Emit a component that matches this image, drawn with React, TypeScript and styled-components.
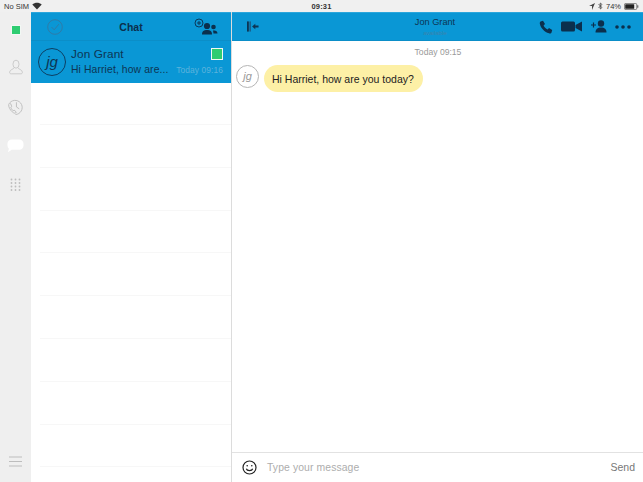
import React from "react";
import styled, { createGlobalStyle } from "styled-components";

const Global = createGlobalStyle`
  html, body { margin: 0; padding: 0; background: #fff; }
  body { font-family: "Liberation Sans", "Open Sans", sans-serif; }
  * { box-sizing: border-box; }
`;
const Page = styled.div`
  width: 643px; height: 482px; display: flex; flex-direction: column; overflow: hidden;
`;
const StatusBar = styled.div`
  height: 12px; flex: none; background: #f0f0f0; display: grid; grid-template-columns: 1fr auto 1fr;
  align-items: center; padding: 0 4px; font-size: 7.5px; color: #333;
`;
const StatusLeft = styled.div`display: flex; align-items: center; gap: 3px;`;
const StatusRight = styled.div`display: flex; align-items: center; justify-content: flex-end; gap: 3px;`;
const Time = styled.div`font-weight: 700; font-size: 7.5px; letter-spacing: .2px;`;
const Body = styled.div`flex: 1; display: flex; min-height: 0;`;
const Rail = styled.nav`
  width: 31px; flex: none; background: #efefef; display: flex; flex-direction: column; align-items: center;
  padding-top: 13px;
`;
const RailSlot = styled.div<{ $h: number }>`
  height: ${p => p.$h}px; width: 100%; display: flex; align-items: flex-start; justify-content: center;
`;
const RailBottom = styled.div`margin-top: auto; padding-bottom: 11px;`;
const Presence = styled.span<{ $size: number }>`
  display: block; width: ${p => p.$size}px; height: ${p => p.$size}px; background: #2ecc71; border: 1px solid #f1f8f4;
`;
const ListPane = styled.section`
  width: 201px; flex: none; display: flex; flex-direction: column; border-right: 1px solid #dcdcdc;
`;
const ListHeader = styled.header`
  height: 29px; flex: none; background: #0a97d5; display: grid; grid-template-columns: 1fr auto 1fr;
  align-items: center; padding: 0 13px; border-top: 1px solid #2ba6dc; border-bottom: 1px solid #0b8ec8;
`;
const HeaderStart = styled.div`display: flex; padding-left: 3px;`;
const HeaderTitle = styled.div`
  font-size: 10.5px; font-weight: 700; color: #0b2f4d; padding-top: 1px;
`;
const HeaderEnd = styled.div`display: flex; justify-content: flex-end;`;
const ChatRow = styled.div`
  height: 42px; flex: none; background: #0a97d5; display: flex; align-items: center; padding: 0 8px 0 7px;
  color: #0d3554;
`;
const Avatar = styled.div`
  width: 28px; height: 28px; flex: none; border-radius: 50%; border: 1px solid #0d3f63;
  display: flex; align-items: center; justify-content: center; font-style: italic; font-size: 15px;
  color: #0d3554; padding-bottom: 2px;
`;
const ChatText = styled.div`flex: 1; min-width: 0; margin-left: 5px;`;
const ChatLine = styled.div`display: flex; justify-content: space-between; align-items: center; height: 15.500px;`;
const ChatName = styled.span`font-size: 11.800px; letter-spacing: .1px;`;
const ChatPreview = styled.span`font-size: 10.400px; letter-spacing: .1px;`;
const ChatTime = styled.span`font-size: 8.400px; color: #5cb3dc; white-space: nowrap; letter-spacing: .1px;`;
const EmptyRow = styled.div`
  height: 42.800px; flex: none; border-bottom: 1px solid #f7f7f7;
  &:first-child { height: 42px; }
`;
const Rows = styled.div`flex: 1; overflow: hidden; margin-left: 9px;`;
const Main = styled.main`flex: 1; min-width: 0; display: flex; flex-direction: column;`;
const MainHeader = styled.header`
  height: 29px; flex: none; background: #0a97d5; display: grid; grid-template-columns: 1fr auto 1fr;
  align-items: center; padding: 0 12px 0 7px; border-top: 1px solid #2ba6dc; border-bottom: 1px solid #0b8ec8;
`;
const BackButton = styled.div`display: flex; padding-left: 8px;`;
const Contact = styled.div`text-align: center; color: #0d3554; line-height: 1; padding-top: 1px;`;
const ContactName = styled.div`font-size: 9.200px;`;
const ContactState = styled.div`font-size: 6px; color: #3d83ac; margin-top: 2px;`;
const Actions = styled.div`display: flex; align-items: center; justify-content: flex-end; gap: 8.500px;`;
const Thread = styled.div`flex: 1; min-height: 0; padding: 6px 4px 0;`;
const DayLabel = styled.div`text-align: center; font-size: 8.600px; color: #9a9a9a; line-height: 11px; padding-left: 1px;`;
const Message = styled.div`display: flex; align-items: flex-start; gap: 5px; margin-top: 7px;`;
const SmallAvatar = styled.div`
  width: 23px; height: 23px; border-radius: 50%; border: 1px solid #b5b5b5; color: #999;
  display: flex; align-items: center; justify-content: center; font-size: 11px; font-style: italic;
  padding-bottom: 1px;
`;
const Bubble = styled.div`
  height: 27px; border-radius: 13.500px; background: #fdf0a6; padding: 0 8px; display: flex; align-items: center;
  font-size: 10.500px; color: #222; width: 159px; white-space: nowrap;
`;
const Composer = styled.footer`
  height: 30px; flex: none; border-top: 1px solid #e2e2e2; display: flex; align-items: center; padding: 0 8px 1px 10px;
`;
const Placeholder = styled.span`font-size: 10.400px; color: #adadad; margin-left: 10px; flex: 1; letter-spacing: .1px;`;
const Send = styled.span`font-size: 10.500px; color: #777;`;

const dots = [0, 1, 2, 3].flatMap(r => [0, 1, 2].map(c => [c, r]));

export default function App() {
  return (
    <Page>
      <Global />
      <StatusBar>
        <StatusLeft>
          <span>No SIM</span>
          <svg width="10" height="8" viewBox="0 0 10 8" aria-hidden="true">
            <path d="M5 7.500 0.300 2.600C3 .2 7 .2 9.700 2.600Z" fill="#333" />
          </svg>
        </StatusLeft>
        <Time>09:31</Time>
        <StatusRight>
          <svg width="6" height="7" viewBox="0 0 6 7" aria-hidden="true"><path d="M6 0 0 3h3v4z" fill="#444" /></svg>
          <svg width="5" height="8" viewBox="0 0 5 8" aria-hidden="true"><path d="M.5 2 4 5.500 2.300 7V1L4 2.500.5 6" fill="none" stroke="#444" strokeWidth=".8" /></svg>
          <span>74%</span>
          <svg width="15" height="7" viewBox="0 0 15 7" aria-hidden="true">
            <rect x=".4" y=".4" width="12.400" height="6.200" rx="1.400" fill="none" stroke="#555" strokeWidth=".7" />
            <rect x="1.200" y="1.200" width="9" height="4.600" rx=".6" fill="#222" />
            <rect x="13.300" y="2.300" width="1" height="2.400" fill="#555" />
          </svg>
        </StatusRight>
      </StatusBar>
      <Body>
        <Rail>
          <RailSlot $h={34}><Presence $size={10} /></RailSlot>
          <RailSlot $h={39}>
            <svg width="16" height="16" viewBox="0 0 18 20" fill="none" stroke="#c6c6c6" strokeWidth="1.100" aria-hidden="true">
              <ellipse cx="9" cy="6.500" rx="3.800" ry="5" />
              <path d="M6.500 11c.3 1.500-5.500 2.200-5.500 5.500 0 1.800 1 2 2 2h12c1 0 2-.2 2-2 0-3.300-5.800-4-5.500-5.500" />
            </svg>
          </RailSlot>
          <RailSlot $h={40}>
            <svg width="17" height="17" viewBox="0 0 18 18" fill="none" stroke="#bdbdbd" strokeWidth="1" aria-hidden="true">
              <path d="M3 5a7.500 7.500 0 1 1 6 12.500" />
              <path d="M10 4.500V9.500L13 11.500" />
              <path d="M2.500 5.500c-1.500 1.500-.5 5 1.500 7.500s4 3.500 5 3l.8-1.200-2.300-2-1 .7c-1-.6-2.200-2.500-2.500-3.700l1-.8-1-2.800z" />
            </svg>
          </RailSlot>
          <RailSlot $h={40}>
            <svg width="17" height="16" viewBox="0 0 18 16" aria-hidden="true">
              <path d="M5 1h8a4.500 4.500 0 0 1 4.500 4.500v2A4.500 4.500 0 0 1 13 12H5l-4 2.500 1-3.500A4.500 4.500 0 0 1 .5 7.500v-2A4.500 4.500 0 0 1 5 1z" fill="#fff" />
            </svg>
          </RailSlot>
          <RailSlot $h={30}>
            <svg width="12" height="14" viewBox="0 0 12 14" fill="#bdbdbd" aria-hidden="true">
              {dots.map(([c, r]) => (
                <circle key={`${c}-${r}`} cx={1.500 + c * 4} cy={1.500 + r * 3.500} r=".9" />
              ))}
            </svg>
          </RailSlot>
          <RailBottom>
            <svg width="13" height="11" viewBox="0 0 13 11" stroke="#bdbdbd" strokeWidth="1" aria-hidden="true">
              <path d="M0 1h13M0 5.500h13M0 10h13" />
            </svg>
          </RailBottom>
        </Rail>
        <ListPane>
          <ListHeader>
            <HeaderStart>
              <svg width="16" height="16" viewBox="0 0 16 16" fill="none" stroke="#2f7ba8" strokeWidth="1" aria-hidden="true">
                <circle cx="8" cy="8" r="7.300" />
                <path d="M4.500 8 7.200 10.800 11.800 5.200" />
              </svg>
            </HeaderStart>
            <HeaderTitle>Chat</HeaderTitle>
            <HeaderEnd>
              <svg width="24" height="17" viewBox="0 0 24 17" aria-hidden="true">
                <circle cx="5" cy="5" r="4" fill="none" stroke="#0b2f4d" strokeWidth=".9" />
                <path d="M3 5h4M5 3v4" stroke="#0b2f4d" strokeWidth=".9" />
                <circle cx="13" cy="8" r="3.100" fill="#0b2f4d" />
                <path d="M8 16.500c0-3.500 2-4.500 5-4.500s5 1 5 4.500z" fill="#0b2f4d" />
                <circle cx="19.500" cy="9" r="2.300" fill="#0b2f4d" />
                <path d="M19 12.500c2.500-.5 4.500.5 4.500 3h-4z" fill="#0b2f4d" />
              </svg>
            </HeaderEnd>
          </ListHeader>
          <ChatRow>
            <Avatar>jg</Avatar>
            <ChatText>
              <ChatLine>
                <ChatName>Jon Grant</ChatName>
                <Presence $size={12} />
              </ChatLine>
              <ChatLine>
                <ChatPreview>Hi Harriet, how are...</ChatPreview>
                <ChatTime>Today 09:16</ChatTime>
              </ChatLine>
            </ChatText>
          </ChatRow>
          <Rows>
            {Array.from({ length: 10 }, (_, i) => <EmptyRow key={i} />)}
          </Rows>
        </ListPane>
        <Main>
          <MainHeader>
            <BackButton>
              <svg width="12" height="11" viewBox="0 0 13 11" aria-hidden="true">
                <rect x="0" y="0" width="2" height="11" fill="#0d3554" />
                <rect x="2.600" y="0" width="1.600" height="11" fill="#1a5c86" />
                <path d="M5.500 5.500 9 2.500v2h3.500v2H9v2z" fill="#0d3554" />
              </svg>
            </BackButton>
            <Contact>
              <ContactName>Jon Grant</ContactName>
              <ContactState>available</ContactState>
            </Contact>
            <Actions>
              <svg width="14" height="14" viewBox="0 0 14 14" aria-hidden="true">
                <path d="M1.500 1.500 4 .8l2 3.200-1.400 1.400c.6 1.600 2.200 3.300 4 4L10 8l3.200 2-.7 2.500c-.3 1-1.500 1.200-2.500.8C5.500 12 2 8.500.9 4c-.3-1 0-2.200.6-2.500z" fill="#0b2f4d" />
              </svg>
              <svg width="21" height="11" viewBox="0 0 21 11" aria-hidden="true">
                <rect x="0" y=".5" width="14" height="10" rx="1.500" fill="#0b2f4d" />
                <path d="M14.500 4 21 .5v10L14.500 7z" fill="#0b2f4d" />
              </svg>
              <svg width="16" height="13" viewBox="0 0 16 13" aria-hidden="true">
                <circle cx="10" cy="3.500" r="3.200" fill="#0b2f4d" />
                <path d="M4.500 12.500c0-3.500 2-5 5.500-5s5.500 1.500 5.500 5z" fill="#0b2f4d" />
                <path d="M0 5h5M2.500 2.500v5" stroke="#0b2f4d" strokeWidth="1.200" />
              </svg>
              <svg width="16" height="4" viewBox="0 0 16 4" fill="#0b2f4d" aria-hidden="true">
                <circle cx="2" cy="2" r="1.800" /><circle cx="8" cy="2" r="1.800" /><circle cx="14" cy="2" r="1.800" />
              </svg>
            </Actions>
          </MainHeader>
          <Thread>
            <DayLabel>Today 09:15</DayLabel>
            <Message>
              <SmallAvatar>jg</SmallAvatar>
              <Bubble>Hi Harriet, how are you today?</Bubble>
            </Message>
          </Thread>
          <Composer>
            <svg width="15" height="15" viewBox="0 0 15 15" fill="none" stroke="#222" strokeWidth="1.200" aria-hidden="true">
              <circle cx="7.500" cy="7.500" r="6.500" />
              <circle cx="5.200" cy="5.800" r=".8" fill="#222" stroke="none" />
              <circle cx="9.800" cy="5.800" r=".8" fill="#222" stroke="none" />
              <path d="M4.300 8.800c.8 2.500 5.600 2.500 6.400 0" />
            </svg>
            <Placeholder>Type your message</Placeholder>
            <Send>Send</Send>
          </Composer>
        </Main>
      </Body>
    </Page>
  );
}
